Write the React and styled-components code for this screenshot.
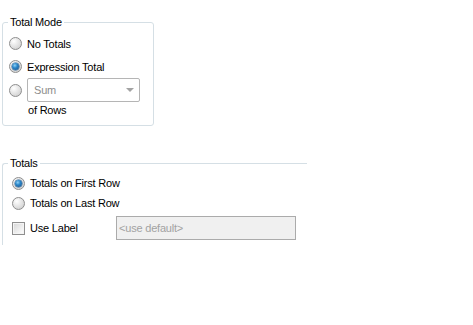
import React from 'react';
import styled, { createGlobalStyle } from 'styled-components';

const GlobalStyle = createGlobalStyle`
  body {
    margin: 0;
    background: #ffffff;
    font-family: "Liberation Sans", Arial, sans-serif;
    font-size: 11px;
    color: #000000;
  }
`;

const Page = styled.div`
  display: flex;
  flex-direction: column;
  align-items: flex-start;
  padding-left: 2px;
`;

const Group = styled.div`
  position: relative;
  box-sizing: border-box;
  width: ${(p) => p.width}px;
  margin-top: ${(p) => p.top}px;
  border-top: 1px solid #d5dfe5;
  border-left: 1px solid #d5dfe5;
  border-right: ${(p) => (p.open ? 'none' : '1px solid #d5dfe5')};
  border-bottom: ${(p) => (p.open ? 'none' : '1px solid #d5dfe5')};
  border-radius: ${(p) => (p.open ? '3px 0 0 0' : '3px')};
  padding: ${(p) => p.pad};
  height: ${(p) => (p.h ? `${p.h}px` : 'auto')};
`;

const Legend = styled.div`
  position: absolute;
  left: 5px;
  top: -8px;
  padding: 0 2px;
  background: #ffffff;
  line-height: 14px;
  letter-spacing: -0.2px;
`;

const Row = styled.div`
  display: flex;
  align-items: center;
  height: ${(p) => p.h}px;
  gap: 5px;
  margin-top: ${(p) => p.mt || 0}px;
`;

const Label = styled.span`
  letter-spacing: -0.2px;
  white-space: nowrap;
  width: ${(p) => (p.w ? `${p.w}px` : 'auto')};
  flex-shrink: 0;
`;

const Radio = styled.span`
  position: relative;
  box-sizing: border-box;
  width: 13px;
  height: 13px;
  border-radius: 50%;
  border: 1px solid #8e8e8e;
  background: radial-gradient(circle at 35% 30%, #ffffff 0%, #e6e6e6 45%, #c8c8c8 100%);
  flex-shrink: 0;
  &::after {
    content: '';
    display: ${(p) => (p.checked ? 'block' : 'none')};
    position: absolute;
    left: 2px;
    top: 2px;
    width: 7px;
    height: 7px;
    border-radius: 50%;
    background: radial-gradient(circle at 40% 35%, #8fd1f7 0%, #2a86c8 40%, #1a4e86 100%);
    box-shadow: 0 0 0 0.5px #2b5f8e;
  }
`;

const Check = styled.span`
  box-sizing: border-box;
  width: 13px;
  height: 13px;
  border: 1px solid #8f8f8f;
  background: linear-gradient(135deg, #d6d6d6 0%, #efefef 60%, #ffffff 100%);
  box-shadow: inset 0 0 0 1px #f4f4f4;
  flex-shrink: 0;
`;

const Combo = styled.div`
  box-sizing: border-box;
  width: 113px;
  height: 24px;
  border: 1px solid #b5b5b5;
  border-radius: 2px;
  display: flex;
  align-items: center;
  justify-content: space-between;
  padding: 0 5px 0 6px;
  color: #8d8d8d;
  letter-spacing: -0.2px;
  background: #ffffff;
`;

const Arrow = styled.span`
  width: 0;
  height: 0;
  border-left: 4px solid transparent;
  border-right: 4px solid transparent;
  border-top: 4px solid #a3a3a3;
`;

const Note = styled.div`
  margin: 1px 0 0 19px;
  line-height: 14px;
  letter-spacing: -0.2px;
`;

const TextBox = styled.div`
  box-sizing: border-box;
  width: 180px;
  height: 24px;
  border: 1px solid #ababab;
  background: #f0f0f0;
  color: #a2a2a2;
  display: flex;
  align-items: center;
  padding-left: 2px;
  letter-spacing: -0.2px;
`;

export default function App() {
  return (
    <>
      <GlobalStyle />
      <Page>
        <Group width={152} h={104} top={22} pad="9px 0 0 6px">
          <Legend>Total Mode</Legend>
          <Row h={23}>
            <Radio />
            <Label>No Totals</Label>
          </Row>
          <Row h={23}>
            <Radio checked />
            <Label>Expression Total</Label>
          </Row>
          <Row h={24}>
            <Radio />
            <Combo>
              <span>Sum</span>
              <Arrow />
            </Combo>
          </Row>
          <Note>of Rows</Note>
        </Group>

        <Group open width={305} top={37} pad="9px 0 5px 9px">
          <Legend>Totals</Legend>
          <Row h={20}>
            <Radio checked />
            <Label>Totals on First Row</Label>
          </Row>
          <Row h={20}>
            <Radio />
            <Label>Totals on Last Row</Label>
          </Row>
          <Row h={24} mt={3}>
            <Check />
            <Label w={81}>Use Label</Label>
            <TextBox>&lt;use default&gt;</TextBox>
          </Row>
        </Group>
      </Page>
    </>
  );
}
